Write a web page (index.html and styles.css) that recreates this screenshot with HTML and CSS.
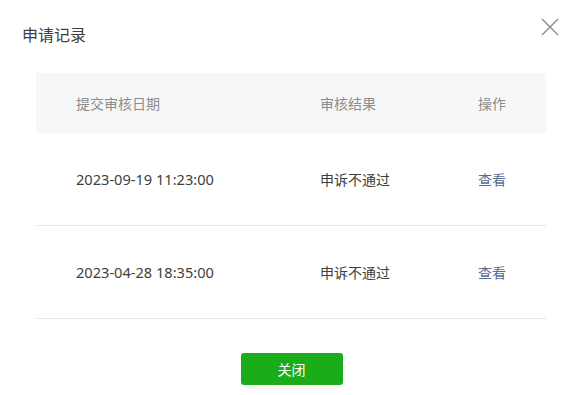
FILE: index.html
```html
<!DOCTYPE html>
<html lang="zh-CN">
<head>
    <meta charset="UTF-8">
    <meta name="viewport" content="width=device-width, initial-scale=1.0">
    <title>申请记录</title>
    <link rel="stylesheet" href="styles.css">
</head>
<body>
    <div class="dialog">
        <div class="dialog-header">
            <h2 class="dialog-title">申请记录</h2>
            <button class="close-button" aria-label="关闭">
                <svg width="18" height="18" viewBox="0 0 18 18">
                    <path d="M1 1 L17 17 M17 1 L1 17" stroke="#8a8a8a" stroke-width="1.4" fill="none"/>
                </svg>
            </button>
        </div>

        <div class="record-table">
            <div class="table-row table-head">
                <div class="cell col-date">提交审核日期</div>
                <div class="cell col-result">审核结果</div>
                <div class="cell col-action">操作</div>
            </div>
            <div class="table-row">
                <div class="cell col-date date">2023-09-19 11:23:00</div>
                <div class="cell col-result">申诉不通过</div>
                <div class="cell col-action"><a class="link" href="#">查看</a></div>
            </div>
            <div class="table-row">
                <div class="cell col-date date">2023-04-28 18:35:00</div>
                <div class="cell col-result">申诉不通过</div>
                <div class="cell col-action"><a class="link" href="#">查看</a></div>
            </div>
        </div>

        <div class="dialog-footer">
            <button class="primary-button">关闭</button>
        </div>
    </div>
</body>
</html>
```

FILE: styles.css
```css
* {
    margin: 0;
    padding: 0;
    box-sizing: border-box;
}

body {
    font-family: "Noto Sans CJK SC", "Noto Sans", sans-serif;
    background: #ffffff;
    color: #404040;
    font-size: 14px;
}

.dialog {
    position: relative;
    width: 583px;
    height: 395px;
    background: #ffffff;
}

.dialog-header {
    padding: 22px 22px 0;
    height: 73px;
}

.dialog-title {
    font-size: 16px;
    font-weight: normal;
    line-height: 24px;
    color: #404040;
}

.close-button {
    position: absolute;
    top: 18px;
    right: 24px;
    width: 18px;
    height: 18px;
    border: none;
    background: none;
    cursor: pointer;
}

.close-button svg {
    display: block;
}

.record-table {
    margin: 0 37px 0 36px;
}

.table-row {
    display: grid;
    grid-template-columns: 284px 158px 1fr;
    align-items: center;
    height: 93px;
    border-bottom: 1px solid #e7e7e7;
}

.table-head {
    height: 60px;
    background: #f6f7f9;
    border-bottom: none;
    color: #8c8c8c;
}

.col-date {
    padding-left: 40px;
}

.date {
    font-family: "Noto Sans", "Noto Sans CJK SC", sans-serif;
    font-size: 14.6px;
}

.link {
    color: #576b95;
    text-decoration: none;
}

.dialog-footer {
    display: flex;
    justify-content: center;
    padding-top: 34px;
}

.primary-button {
    width: 102px;
    height: 32px;
    background: #1aad19;
    color: #ffffff;
    border: none;
    border-radius: 3px;
    font-family: inherit;
    font-size: 14px;
    cursor: pointer;
}
```
